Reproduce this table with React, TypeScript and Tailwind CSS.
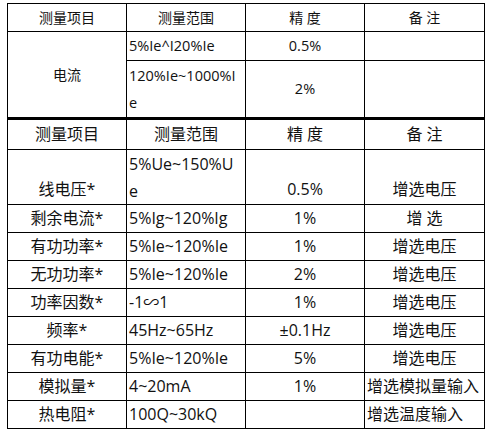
import React from 'react';

type Row = {
  item: string;
  range: React.ReactNode;
  acc: string;
  note: string;
  noteLeft?: boolean;
};

const ROWS: Row[] = [
  { item: '剩余电流*', range: '5%Ig~120%Ig', acc: '1%', note: '增 选' },
  { item: '有功功率*', range: '5%Ie~120%Ie', acc: '1%', note: '增选电压' },
  { item: '无功功率*', range: '5%Ie~120%Ie', acc: '2%', note: '增选电压' },
  { item: '功率因数*', range: '-1∽1', acc: '1%', note: '增选电压' },
  { item: '频率*', range: '45Hz~65Hz', acc: '±0.1Hz', note: '增选电压' },
  { item: '有功电能*', range: '5%Ie~120%Ie', acc: '5%', note: '增选电压' },
  { item: '模拟量*', range: '4~20mA', acc: '1%', note: '增选模拟量输入', noteLeft: true },
  { item: '热电阻*', range: '100Q~30kQ', acc: '', note: '增选温度输入', noteLeft: true },
];

const font = { fontFamily: '"Open Sans", "Noto Sans CJK SC", sans-serif' };
const cell = 'border border-black p-0';

function Lines({ a, b }: { a: string; b: string }) {
  return (
    <div className="flex flex-col pl-[2px]">
      <div className="flex h-[28px] items-center">{a}</div>
      <div className="flex h-[26px] items-center">{b}</div>
    </div>
  );
}

export default function App() {
  return (
    <div className="bg-white pl-[7px] pt-[3px] text-[#111]" style={font}>
      <table className="w-[477px] table-fixed border-collapse text-[14px] leading-[18px]">
        <colgroup>
          <col className="w-[119px]" />
          <col className="w-[119px]" />
          <col className="w-[119px]" />
          <col className="w-[120px]" />
        </colgroup>
        <tbody>
          <tr className="h-[28px]">
            <td className={`${cell} text-center`}>测量项目</td>
            <td className={`${cell} text-center`}>测量范围</td>
            <td className={`${cell} text-center`}>精 度</td>
            <td className={`${cell} text-center`}>备 注</td>
          </tr>
          <tr className="h-[29px]">
            <td rowSpan={2} className={`${cell} text-center align-middle`}>电流</td>
            <td className={`${cell} pl-[2px] text-[14.5px]`}>5%Ie^I20%Ie</td>
            <td className={`${cell} text-center text-[14.5px]`}>0.5%</td>
            <td className={cell}></td>
          </tr>
          <tr className="h-[57px]">
            <td className={`${cell} text-[14.5px]`}>
              <Lines a="120%Ie~1000%I" b="e" />
            </td>
            <td className={`${cell} text-center text-[14.5px]`}>2%</td>
            <td className={cell}></td>
          </tr>
        </tbody>
      </table>
      <table className="w-[477px] table-fixed border-collapse text-[16px] leading-[20px]">
        <colgroup>
          <col className="w-[119px]" />
          <col className="w-[119px]" />
          <col className="w-[119px]" />
          <col className="w-[120px]" />
        </colgroup>
        <tbody>
          <tr className="h-[30px]">
            <td className={`${cell} border-t-2 text-center`}>测量项目</td>
            <td className={`${cell} border-t-2 text-center`}>测量范围</td>
            <td className={`${cell} border-t-2 text-center`}>精 度</td>
            <td className={`${cell} border-t-2 text-center`}>备 注</td>
          </tr>
          <tr className="h-[55px]">
            <td className={`${cell} pb-[5px] text-center align-bottom`}>线电压*</td>
            <td className={`${cell} align-bottom`}>
              <Lines a="5%Ue~150%U" b="e" />
            </td>
            <td className={`${cell} pb-[5px] text-center align-bottom`}>0.5%</td>
            <td className={`${cell} pb-[5px] text-center align-bottom`}>增选电压</td>
          </tr>
          {ROWS.map((r) => (
            <tr key={r.item} className="h-[28px]">
              <td className={`${cell} text-center`}>{r.item}</td>
              <td className={`${cell} pl-[2px]`}>{r.range}</td>
              <td className={`${cell} text-center`}>{r.acc}</td>
              <td className={`${cell} ${r.noteLeft ? 'pl-[2px]' : 'text-center'} whitespace-nowrap`}>
                {r.note}
              </td>
            </tr>
          ))}
        </tbody>
      </table>
    </div>
  );
}
